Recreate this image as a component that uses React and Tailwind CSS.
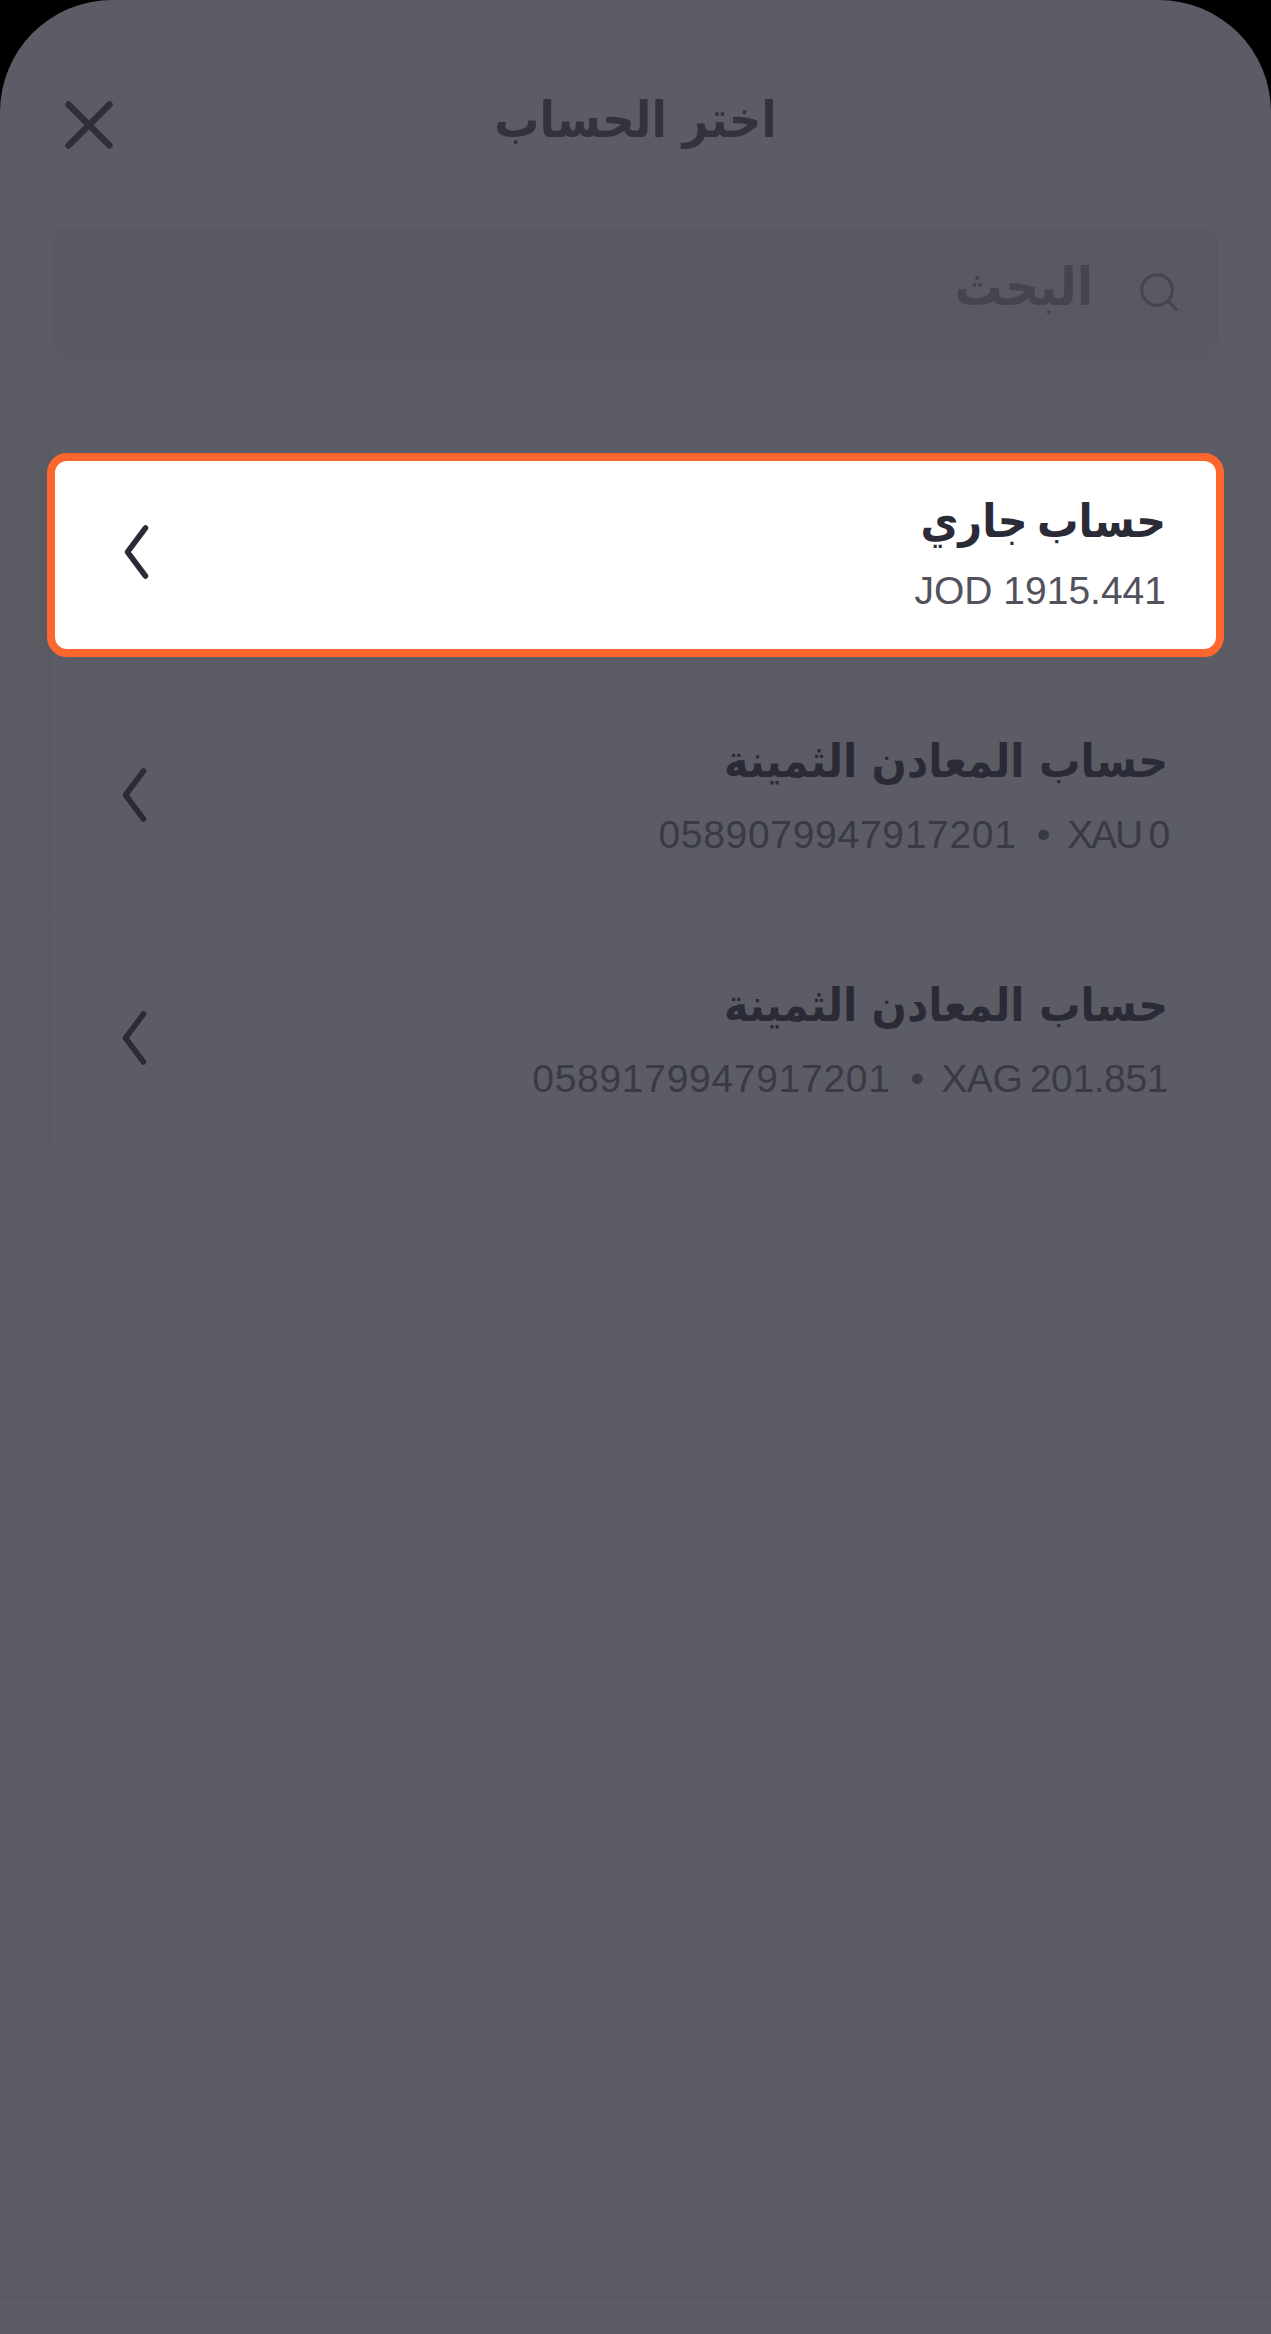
import React from "react";
import { Search } from "lucide-react";

const arabic = "font-['DejaVu_Sans_Condensed','DejaVu_Sans',sans-serif]";
const latin = "font-['Liberation_Sans',sans-serif]";

function Chevron() {
  return (
    <svg width="26" height="58" viewBox="0 0 26 58" fill="none" className="shrink-0 text-[#2b2b38]">
      <path d="M21.5 5 L3.5 29 L21.5 53" stroke="currentColor" strokeWidth="5.5" strokeLinecap="round" strokeLinejoin="round" />
    </svg>
  );
}

function Sub({ number, rest, color, restClass }) {
  return (
    <div dir="ltr" className={`${latin} flex text-[39px] leading-[46px] whitespace-pre ${color}`}>
      {number && <span className="tracking-[0.7px]">{number}</span>}
      {number && <span className="ml-[20px] mr-[17px]">•</span>}
      <span className={restClass}>{rest}</span>
    </div>
  );
}

function RowBody({ title, titleClass, children, gap }) {
  return (
    <div className="flex w-full items-center justify-between">
      <Chevron />
      <div dir="rtl" className="flex flex-col items-start">
        <div className={`${arabic} text-[46px] leading-[60px] font-bold text-[#2b2b38] ${titleClass}`}>{title}</div>
        <div className={gap}>{children}</div>
      </div>
    </div>
  );
}

export default function App() {
  return (
    <div className="h-[2334px] w-[1271px] bg-black overflow-hidden">
      <div className="flex h-full flex-col overflow-hidden rounded-t-[112px] bg-[#5c5c66]">
        <div className="px-[53px]">
          <div className="mt-[92px] grid h-[66px] grid-cols-[1fr_auto_1fr] items-center">
            <svg width="48" height="48" viewBox="0 0 48 48" fill="none" className="ml-[12px] text-[#2f2f3b]">
              <path d="M3.5 3.5 L44.5 44.5 M44.5 3.5 L3.5 44.5" stroke="currentColor" strokeWidth="6.5" strokeLinecap="round" />
            </svg>
            <div className={`${arabic} pb-[10px] text-[50px] leading-[56px] font-bold text-[#33333f]`} dir="rtl">اختر الحساب</div>
            <div />
          </div>

          <div dir="rtl" className="mt-[69px] flex h-[126px] items-center gap-[43px] rounded-[16px] bg-[#595962] pr-[36px]">
            <Search size={46} strokeWidth={1.6} className="mt-[3px] text-[#45454f]" />
            <div className={`${arabic} pb-[6px] text-[53px] leading-[70px] font-bold text-[#45454f]`}>البحث</div>
          </div>
        </div>

        <div className="flex-1 bg-[#5a5a63] px-[53px] pt-[76px]">
          <div className="flex flex-col rounded-[20px] bg-[#5c5c66]">
            <div className="flex h-[244px] pt-[24px] pb-[16px]">
              <div className="-mx-[6px] flex w-[calc(100%+12px)] items-center rounded-[20px] border-[8px] border-[#fd662c] bg-white pl-[69px] pr-[50px]">
                <div className="mb-[6px] w-full">
                  <RowBody gap="mt-[17px]" title="حساب جاري" titleClass="[word-spacing:-5px]">
                    <Sub rest="JOD 1915.441" color="text-[#52525c]" />
                  </RowBody>
                </div>
              </div>
            </div>
            <div className="flex h-[244px] items-center border-b border-[#5a5a64] pl-[69px] pr-[50px]">
              <RowBody gap="mt-[21px]" title="حساب المعادن الثمينة">
                <Sub number="0589079947917201" rest="XAU 0" restClass="[word-spacing:-1px] tracking-[-2.2px]" color="text-[#3a3a45]" />
              </RowBody>
            </div>
            <div className="flex h-[242px] items-center pl-[69px] pr-[50px]">
              <RowBody gap="mt-[21px]" title="حساب المعادن الثمينة">
                <Sub number="0589179947917201" rest="XAG 201.851" restClass="[word-spacing:-3px] tracking-[-0.4px]" color="text-[#3a3a45]" />
              </RowBody>
            </div>
          </div>
        </div>
        <div className="h-[34px]" />
      </div>
    </div>
  );
}
